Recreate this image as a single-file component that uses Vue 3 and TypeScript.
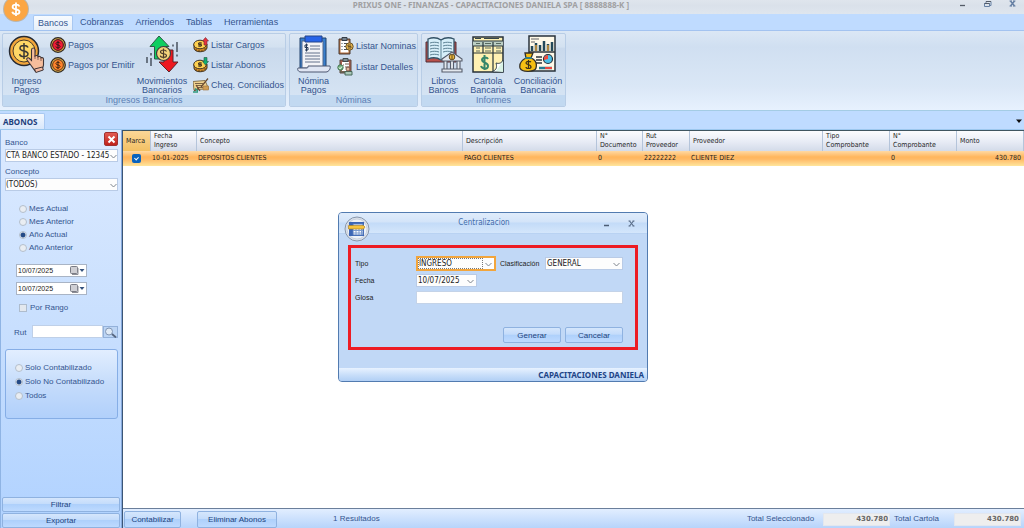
<script setup lang="ts">
import { ref } from 'vue'

const tabs = ['Bancos', 'Cobranzas', 'Arriendos', 'Tablas', 'Herramientas']
const activeTab = ref('Bancos')

const periods = ['Mes Actual', 'Mes Anterior', 'Año Actual', 'Año Anterior']
const period = ref('Año Actual')
const states = ['Solo Contabilizado', 'Solo No Contabilizado', 'Todos']
const state = ref('Solo No Contabilizado')

const fromDate = ref('10/07/2025')
const toDate = ref('10/07/2025')
const byRange = ref(false)
const rut = ref('')
const marked = ref(true)
const glosa = ref('')

interface Column { key: string; lines: string[] }
const columns: Column[] = [
  { key: 'mark', lines: ['Marca'] },
  { key: 'date', lines: ['Fecha', 'Ingreso'] },
  { key: 'concept', lines: ['Concepto'] },
  { key: 'desc', lines: ['Descripción'] },
  { key: 'doc', lines: ['N°', 'Documento'] },
  { key: 'rut', lines: ['Rut', 'Proveedor'] },
  { key: 'supplier', lines: ['Proveedor'] },
  { key: 'type', lines: ['Tipo', 'Comprobante'] },
  { key: 'num', lines: ['N°', 'Comprobante'] },
  { key: 'amount', lines: ['Monto'] },
]
</script>

<template>
  <div class="app">
    <header class="titlebar">
      <h1>PRIXUS ONE - FINANZAS - CAPACITACIONES DANIELA SPA [ 8888888-K ]</h1>
      <div class="winbtns">
        <button aria-label="Minimizar"><svg width="9" height="9" viewBox="0 0 9 9"><path d="M2 5.5h5" stroke="#555c68" stroke-width="1.3" /></svg></button>
        <button aria-label="Restaurar"><svg width="9" height="9" viewBox="0 0 9 9"><path d="M3 3V1.500h5v4H6.500M1.500 3.500h5v3h-5z" fill="none" stroke="#6680a4" /><path d="M3 1.500h5M1.500 3.500h5" stroke="#555c68" /></svg></button>
        <button aria-label="Cerrar"><svg width="9" height="9" viewBox="0 0 9 9"><path d="M2.500 1l4 5M6.500 1l-4 5" stroke="#6680a4" stroke-width="1.500" /><path d="M1.500 1H4M5 1h2.500M1.500 6H4M5 6h2.500" stroke="#6680a4" /></svg></button>
      </div>
      <div class="orb">
        <svg width="28" height="28" viewBox="0 0 28 28"><circle cx="14" cy="14" r="13" fill="#b9b5ae" /><circle cx="14" cy="14" r="12" fill="#fba644" /><path d="M17.500 11.500c-.6-1.400-1.700-1.900-3.500-1.900-2 0-3.400.8-3.400 2.300 0 3.400 6.900 1.600 6.900 4.800 0 1.600-1.500 2.400-3.500 2.400-1.900 0-3.400-.8-3.700-2.300M14 7.500v13.500" fill="none" stroke="#fff" stroke-width="1.800" /></svg>
      </div>
    </header>

    <nav class="tabs">
      <button v-for="t in tabs" :key="t" :class="{ active: t === activeTab }" @click="activeTab = t">{{ t }}</button>
    </nav>

    <section class="ribbon">
      <div class="group">
        <div class="group-body">
          <button class="big b-first">
            <svg width="38" height="38" viewBox="0 0 38 38">
              <circle cx="16" cy="16" r="14.500" fill="#f2a63b" stroke="#262a33" stroke-width="1.500" />
              <circle cx="16" cy="16" r="11" fill="#ffd766" stroke="#493a29" />
              <path d="M20 12.500c-.6-1.500-2-2-4-2-2.400 0-4 1-4 2.700 0 3.800 8 1.700 8 5.600 0 1.900-1.800 2.800-4 2.800-2.400 0-4-.8-4.400-2.600M16 8v16" fill="none" stroke="#3b3935" stroke-width="1.500" />
              <path d="M22 29l-3-4c-1-1.700 1-3 2.500-1.500l2 2V15c0-2.600 3.500-2.600 3.500 0v6c1-1 3-.6 3 .8 1-.9 3-.4 3 1 1.300-.6 2.500.2 2.500 1.500v5.500c0 2-1 3-1.500 4.500l-7 1.500z" fill="#f6bd9c" stroke="#3f3537" stroke-width="1.100" />
              <path d="M27 20v4M30 22v3M33 23v3" stroke="#704a44" stroke-width=".8" /><path d="M26.500 34l8-2 .8 3-7.500 2.500z" fill="#f3b9a2" stroke="#3f3537" />
            </svg>
            <span>Ingreso<br>Pagos</span>
          </button>
          <div class="smalls s-first">
            <button>
              <svg width="16" height="16" viewBox="0 0 16 16"><circle cx="8" cy="8" r="7.300" fill="#e3b34d" stroke="#2e2923" stroke-width="1.200" /><circle cx="8" cy="8" r="5.400" fill="#f01d35" stroke="#41181c" /><path d="M10 6.300c-.3-.8-1-1-2-1-1.200 0-2 .5-2 1.300 0 1.900 4 .9 4 2.800 0 1-.9 1.400-2 1.400-1.200 0-2-.4-2.200-1.300M8 4v8" fill="none" stroke="#33151a" /></svg>
              <span>Pagos</span>
            </button>
            <button>
              <svg width="16" height="16" viewBox="0 0 16 16"><circle cx="8" cy="8" r="7.300" fill="#e3b34d" stroke="#2e2923" stroke-width="1.200" /><circle cx="8" cy="8" r="5.400" fill="#ff842c" stroke="#63381a" /><path d="M10 6.300c-.3-.8-1-1-2-1-1.200 0-2 .5-2 1.300 0 1.900 4 .9 4 2.800 0 1-.9 1.400-2 1.400-1.200 0-2-.4-2.200-1.300M8 4v8" fill="none" stroke="#3d2313" /></svg>
              <span>Pagos por Emitir</span>
            </button>
          </div>
          <button class="big b-mov">
            <svg width="38" height="38" viewBox="0 0 38 38">
              <path d="M16 1l10 10.500h-5V24h-9.500V11.500H7z" fill="#0fce60" stroke="#2f5848" /><path d="M21 15h9v12h5l-9 10-10-10h5z" fill="#ed1820" stroke="#5b2428" />
              <circle cx="20.500" cy="18.500" r="7" fill="#f4d47c" stroke="#3d3d3d" stroke-width="1.200" /><path d="M23.500 16.500c-.5-1-1.500-1.500-3-1.500s-3 .6-3 2c0 2.500 6 1 6 3.500 0 1.300-1.400 1.900-3 1.900s-3-.6-3.200-1.700M20.500 13.500v10" fill="none" stroke="#4b3b2b" stroke-width="1.200" />
              <path d="M34 7v10M34 19.500v2M30 9.500v2M8 18v2.500M8 23v8M4 22v6" stroke="#515b67" stroke-width="1.600" />
            </svg>
            <span>Movimientos<br>Bancarios</span>
          </button>
          <div class="smalls s-three">
            <button>
              <svg width="16" height="16" viewBox="0 0 16 16"><path d="M1 7v4c0 5 12 5 13 0V7" fill="#d58c23" stroke="#3c3125" /><ellipse cx="7" cy="7.500" rx="6.300" ry="4.300" fill="#ffd150" stroke="#3c3125" /><path d="M9 6H5.500v1.500H8.500V9H5M7 5v5" fill="none" stroke="#493920" /><path d="M3 12v2M6 13v2M9 13v2M12 11v2" stroke="#59401d" /><path d="M12.500.5L15.500 4H14v4h-3V4H9.500z" fill="#e63240" stroke="#732831" stroke-width=".6" /></svg>
              <span>Listar Cargos</span>
            </button>
            <button>
              <svg width="16" height="16" viewBox="0 0 16 16"><path d="M1 7v4c0 5 12 5 13 0V7" fill="#d58c23" stroke="#3c3125" /><ellipse cx="7" cy="7.500" rx="6.300" ry="4.300" fill="#ffd150" stroke="#3c3125" /><path d="M9 6H5.500v1.500H8.500V9H5M7 5v5" fill="none" stroke="#493920" /><path d="M3 12v2M6 13v2M9 13v2M12 11v2" stroke="#59401d" /><path d="M11 .5h3v4h1.500L12.500 8l-3-3.500H11z" fill="#13ae70" stroke="#245442" stroke-width=".6" /></svg>
              <span>Listar Abonos</span>
            </button>
            <button>
              <svg width="16" height="16" viewBox="0 0 16 16"><path d="M0 4.500l12-1 3.500 8L1 13z" fill="#efd18e" stroke="#897652" /><path d="M2 6.500h8M3 8.500h6M4 10.500h7" stroke="#7c6345" /><path d="M8 10l7-8.500M3 8l4 6M6 11l-5 3" stroke="#6a4b32" stroke-width="1.200" /><path d="M2 11.500l3 2.500M0 15h5" stroke="#319a81" stroke-width="1.500" /><path d="M10 9h5.500v4H10z" fill="#d19e56" stroke="#9b713b" stroke-width=".6" /></svg>
              <span>Cheq. Conciliados</span>
            </button>
          </div>
        </div>
        <div class="group-name">Ingresos Bancarios</div>
      </div>

      <div class="group">
        <div class="group-body">
          <button class="big b-nom">
            <svg width="38" height="38" viewBox="0 0 38 38">
              <path d="M5 3h26v31H5z" fill="#397fcd" stroke="#20416a" /><path d="M7 6h21v27H7z" fill="#f3f3f7" stroke="#53698d" /><path d="M10 1h17v6H10z" fill="#2764e9" stroke="#25458a" />
              <path d="M15 11h10M15 14h10M10 18h15M10 21h15M10 24h15M10 27h15" stroke="#63708b" /><path d="M13 10h-3v2.500h3V15h-3M11.500 8.500v8" fill="none" stroke="#253857" />
              <path d="M13 31h22c1 2-1 6-4 6H6c-3 0-4-3-3-4h9c1 0 1-1 1-2z" fill="#dfe5f3" stroke="#4c5671" />
            </svg>
            <span>Nómina<br>Pagos</span>
          </button>
          <div class="smalls s-nom">
            <button>
              <svg width="17" height="18" viewBox="0 0 17 18"><path d="M2 2h11v15H2z" fill="#b56d3b" stroke="#493a35" /><path d="M3.500 3.500h8v12h-8z" fill="#fff" /><path d="M5 .5h5v3H5z" fill="#75818c" stroke="#353c46" /><path d="M4.500 6.500h1M4.500 9.500h1M4.500 12.500h1M7 6.500h4M7 9.500h3M7 12.500h3" stroke="#4c5057" /><circle cx="12.500" cy="9.500" r="3.700" fill="#e6b44c" stroke="#6b5328" /><path d="M14 8h-3v1.500h3V11h-3" fill="none" stroke="#6b5328" /></svg>
              <span>Listar Nominas</span>
            </button>
            <button>
              <svg width="17" height="18" viewBox="0 0 17 18"><path d="M3 2h11v13H3z" fill="#a8604f" stroke="#5c4940" /><path d="M5 4h7v9H5z" fill="#fff" /><path d="M6 .5h5v3H6z" fill="#7f8c93" stroke="#424b4d" /><path d="M8 6h4M8 9h4M6 7h1" stroke="#705a51" /><circle cx="3.500" cy="9.500" r="2.700" fill="#77b683" stroke="#437250" /><path d="M2 9.500l1 1.300L5 8.500" fill="none" stroke="#fff" /><path d="M8 13.500h7V17H8zM3 14h5" fill="#a9c7b8" stroke="#47685a" /><circle cx="11" cy="11" r="2" fill="#e1b89e" stroke="#785344" /></svg>
              <span>Listar Detalles</span>
            </button>
          </div>
        </div>
        <div class="group-name">Nóminas</div>
      </div>

      <div class="group">
        <div class="group-body">
          <button class="big b-lib">
            <svg width="38" height="38" viewBox="0 0 38 38">
              <path d="M1 7h30v20H1z" fill="#b9504a" stroke="#512f36" /><path d="M3 4c5-2 10-1 13 1 3-2 8-3 13-1v20c-5-2-10-1-13 1-3-2-8-3-13-1z" fill="#d6eff9" stroke="#345367" stroke-width="1.300" /><path d="M16 5v20M5 8c3-1 6-1 9 0M5 11c3-1 6-1 9 0M5 14c3-1 6-1 9 0M5 17c3-1 6-1 9 0M5 20c3-1 6-1 9 0M18 8c3-1 6-1 9 0M18 11c3-1 6-1 9 0M18 14c3-1 6-1 9 0M18 17c3-1 6-1 9 0" fill="none" stroke="#5b8193" />
              <path d="M17 24l10-7 10 7v2H17zM19 26h3v8h-3zM25.500 26h3v8h-3zM32 26h3v8h-3zM17 34h20v3H17z" fill="#e3e8ee" stroke="#565d6c" stroke-width="1.100" /><circle cx="27" cy="22" r="2.800" fill="#efb93d" stroke="#5f4b22" /><path d="M27 20v4" stroke="#5f4b22" />
            </svg>
            <span>Libros<br>Bancos</span>
          </button>
          <button class="big b-car">
            <svg width="38" height="38" viewBox="0 0 38 38">
              <path d="M4 2h30v35H4z" fill="#fff1b3" stroke="#273139" stroke-width="1.500" /><path d="M4 6h30v5H4z" fill="#bccfc4" /><path d="M6 3.500h6M15 3.500h15" stroke="#36454b" /><path d="M4 6h30M4 11h30M4 18h30M14 7v11M24 7v30" stroke="#26343a" stroke-width="1.200" /><path d="M7 8.500h4M16 8.500h6M27 8.500h5M7 13h4M7 16h4M16 13h6M16 16h6M27 13h5M27 16h5" stroke="#58695f" /><path d="M19 24c-1-2-6-2-6 1s6 2 6 6-6 3-7 0M15.500 20v15" fill="none" stroke="#36866b" stroke-width="2" /><path d="M24 36c4-1 4-5 3-8 3 1 6 0 7-3v12H24z" fill="#fff" stroke="#33434a" /><path d="M27 36l7-10v11z" fill="#d9f3e6" />
            </svg>
            <span>Cartola<br>Bancaria</span>
          </button>
          <button class="big b-con">
            <svg width="38" height="38" viewBox="0 0 38 38">
              <path d="M10 1h26v35H10z" fill="#fff9e8" stroke="#28323b" stroke-width="1.500" /><path d="M12 4h8M12 7h4" stroke="#656566" stroke-width="1.200" /><path d="M13 11v5M17 8v8M21 10v6M25 6v10M29 9v7M33 7v9" stroke="#23495a" stroke-width="2.500" /><path d="M17 10v6M29 10v6" stroke="#dd9d39" stroke-width="1.500" /><path d="M10 17h26M17 22h6M17 25h6M17 28h6" stroke="#2e363b" stroke-width="1.600" /><circle cx="29" cy="24" r="4.500" fill="#4cc0e7" stroke="#27323c" stroke-width="1.200" /><path d="M29 24v-4a4 4 0 0 0-4 5z" fill="#f04c3d" /><path d="M20 33h13" stroke="#237b91" stroke-width="2.500" /><path d="M26 33h7" stroke="#ea4740" stroke-width="2" />
              <path d="M6 18h8l-2 5c5 2 6 6 5 10-1 4-14 5-16 0-1-5 2-8 6-10z" fill="#f6bf13" stroke="#34312b" stroke-width="1.300" /><path d="M6 23h7" stroke="#327c83" stroke-width="2" /><path d="M12 27c-1-1-5-1-5 1 0 2 5 1 5 4 0 2-5 2-5 0M9.500 25v9" fill="none" stroke="#3c3019" stroke-width="1.200" />
            </svg>
            <span>Conciliación<br>Bancaria</span>
          </button>
        </div>
        <div class="group-name">Informes</div>
      </div>
    </section>

    <div class="docs">
      <button class="doc">ABONOS</button>
      <button class="doc-menu" aria-label="Ventanas"><svg width="8" height="5" viewBox="0 0 8 5"><path d="M1 .5h6L4 4z" fill="#111" /></svg></button>
    </div>

    <div class="body">
      <aside class="side">
        <button class="side-close" aria-label="Cerrar panel"><svg width="9" height="9" viewBox="0 0 9 9"><path d="M1.500 1.500l6 6M7.500 1.500l-6 6" stroke="#fff" stroke-width="2" /></svg></button>
        <label class="cap first" for="bank">Banco</label>
        <div class="pick">
          <select id="bank"><option>CTA BANCO ESTADO - 12345</option></select>
          <svg width="7" height="5" viewBox="0 0 7 5"><path d="M.5 1l3 3 3-3" fill="none" stroke="#7e858e" /></svg>
        </div>
        <label class="cap" for="concept">Concepto</label>
        <div class="pick">
          <select id="concept"><option>(TODOS)</option></select>
          <svg width="7" height="5" viewBox="0 0 7 5"><path d="M.5 1l3 3 3-3" fill="none" stroke="#7e858e" /></svg>
        </div>
        <div class="periods">
          <label v-for="p in periods" :key="p"><input v-model="period" type="radio" name="period" :value="p">{{ p }}</label>
        </div>
        <div class="date">
          <input v-model="fromDate" type="text" aria-label="Desde">
          <button aria-label="Elegir fecha inicial"><svg width="17" height="9" viewBox="0 0 17 9"><rect x="1.500" y=".5" width="7" height="7" rx="1" fill="#cfcfd4" stroke="#797b84" /><path d="M3 8.500h6V2" fill="none" stroke="#8d8e96" /><path d="M10.500 3h5L13 6z" fill="#35527e" /></svg></button>
        </div>
        <div class="date">
          <input v-model="toDate" type="text" aria-label="Hasta">
          <button aria-label="Elegir fecha final"><svg width="17" height="9" viewBox="0 0 17 9"><rect x="1.500" y=".5" width="7" height="7" rx="1" fill="#cfcfd4" stroke="#797b84" /><path d="M3 8.500h6V2" fill="none" stroke="#8d8e96" /><path d="M10.500 3h5L13 6z" fill="#35527e" /></svg></button>
        </div>
        <label class="range"><input v-model="byRange" type="checkbox">Por Rango</label>
        <div class="rut">
          <label for="rut">Rut</label>
          <input id="rut" v-model="rut" type="text">
          <button aria-label="Buscar rut"><svg width="13" height="11" viewBox="0 0 13 11"><circle cx="5" cy="4.500" r="3.500" fill="#dfeaf6" stroke="#8296b5" /><path d="M8 7l4 3.500" stroke="#57667f" stroke-width="1.800" /></svg></button>
        </div>
        <div class="states">
          <label v-for="s in states" :key="s"><input v-model="state" type="radio" name="state" :value="s">{{ s }}</label>
        </div>
        <div class="side-actions">
          <button class="btn">Filtrar</button>
          <button class="btn">Exportar</button>
        </div>
      </aside>

      <main class="main">
        <div class="grid">
          <table>
            <colgroup><col v-for="c in columns" :key="c.key" :class="'c-' + c.key"></colgroup>
            <thead>
              <tr>
                <th v-for="c in columns" :key="c.key" :class="'h-' + c.key"><div v-for="l in c.lines" :key="l">{{ l }}</div></th>
              </tr>
            </thead>
            <tbody>
              <tr>
                <td class="mark"><input v-model="marked" type="checkbox" aria-label="Marca"></td>
                <td>10-01-2025</td>
                <td>DEPOSITOS CLIENTES</td>
                <td>PAGO CLIENTES</td>
                <td>0</td>
                <td>22222222</td>
                <td>CLIENTE DIEZ</td>
                <td></td>
                <td>0</td>
                <td class="num">430.780</td>
              </tr>
            </tbody>
          </table>
        </div>
        <footer class="foot">
          <button class="btn post">Contabilizar</button>
          <button class="btn del">Eliminar Abonos</button>
          <span class="count">1 Resultados</span>
          <label for="sel">Total Seleccionado</label>
          <input id="sel" class="t-sel" type="text" value="430.780" readonly>
          <label for="car">Total Cartola</label>
          <input id="car" class="t-car" type="text" value="430.780" readonly>
        </footer>
      </main>
    </div>

    <div class="dialog" role="dialog" aria-labelledby="dlg-title">
      <div class="dlg-bar">
        <h2 id="dlg-title">Centralizacion</h2>
        <button aria-label="Minimizar diálogo"><svg width="9" height="9" viewBox="0 0 9 9"><path d="M2 6.500h5" stroke="#4c5d75" stroke-width="1.300" /></svg></button>
        <button aria-label="Cerrar diálogo"><svg width="9" height="9" viewBox="0 0 9 9"><path d="M2.500 2l4 5M6.500 2l-4 5" stroke="#5b6f8a" stroke-width="1.200" /><path d="M1.500 2h2M5.500 2h2M1.500 7h2M5.500 7h2" stroke="#5b6f8a" /></svg></button>
      </div>
      <div class="dlg-orb">
        <svg width="26" height="26" viewBox="0 0 26 26"><circle cx="13" cy="13" r="12" fill="#dbe1eb" stroke="#8896aa" /><circle cx="13" cy="13" r="10" fill="#eef2f8" stroke="#b9c3d2" stroke-width=".6" /><path d="M5 6h15v14H5z" fill="#3c66b5" /><path d="M9 8h10v11H9z" fill="#fff" stroke="#5579bb" /><path d="M9 14.500h10M9 17h10M12 12v7M15 12v7M17.500 12v7" stroke="#7c9bce" /><path d="M4.500 9.500h15l1.500 1.500-1.500 2h-15z" fill="#f7c33d" stroke="#a98224" stroke-width=".7" /></svg>
      </div>
      <form class="form" @submit.prevent>
        <div class="row">
          <label for="kind">Tipo</label>
          <div class="pick kind">
            <select id="kind"><option>INGRESO</option></select>
            <svg width="7" height="5" viewBox="0 0 7 5"><path d="M.5 1l3 3 3-3" fill="none" stroke="#7e858e" /></svg>
          </div>
          <label class="second" for="class">Clasificación</label>
          <div class="pick class">
            <select id="class"><option>GENERAL</option></select>
            <svg width="7" height="5" viewBox="0 0 7 5"><path d="M.5 1l3 3 3-3" fill="none" stroke="#7e858e" /></svg>
          </div>
        </div>
        <div class="row">
          <label for="day">Fecha</label>
          <div class="pick day">
            <select id="day"><option>10/07/2025</option></select>
            <svg width="7" height="5" viewBox="0 0 7 5"><path d="M.5 1l3 3 3-3" fill="none" stroke="#7e858e" /></svg>
          </div>
        </div>
        <div class="row">
          <label for="glosa">Glosa</label>
          <input id="glosa" v-model="glosa" class="glosa" type="text">
        </div>
        <div class="dlg-actions">
          <button class="btn" type="submit">Generar</button>
          <button class="btn" type="button">Cancelar</button>
        </div>
      </form>
      <div class="dlg-status">CAPACITACIONES DANIELA</div>
    </div>
  </div>
</template>

<style>
html, body { height: 100%; }
body { margin: 0; overflow: hidden; }
#app { height: 100%; }
</style>

<style scoped>
.app {
  --ui: "Liberation Sans", Arial, sans-serif;
  --data: "DejaVu Sans Condensed", "DejaVu Sans", sans-serif;
  --title: "Noto Sans", sans-serif;
  --ink: #34558f;
  position: relative;
  display: flex;
  flex-direction: column;
  min-height: 100vh;
  font: 9px/10px var(--ui);
  color: var(--ink);
  background: #bfdbff;
}
.app *, .app *::before, .app *::after { box-sizing: border-box; }
button, input, select { font: inherit; color: inherit; margin: 0; padding: 0; border: 0; background: none; border-radius: 0; }
button { white-space: nowrap; }
svg { display: block; flex: none; }
h1, h2 { margin: 0; }
label { white-space: nowrap; }

.titlebar {
  position: relative;
  display: flex;
  justify-content: center;
  height: 14px;
  background: linear-gradient(#dfe5ed, #dae1ea 40%, #dfe6ee);
}
h1 { margin-right: 42px; font: bold 8px/10px var(--title); color: #a0a0a2; white-space: nowrap; }
.winbtns { position: absolute; right: 7px; top: 0; display: flex; gap: 16px; }
.orb { position: absolute; left: 2px; top: -5px; z-index: 2; }

.tabs { display: flex; align-items: flex-end; height: 17px; padding: 0 0 0 33px; border-bottom: 1px solid #a3c3f0; }
.tabs button { padding: 0 6px; height: 15px; line-height: 15px; }
.tabs .active { padding: 0 4px; margin-right: 1px; background: linear-gradient(#f7fbff, #e6eff9); border: 1px solid #a9c8f1; border-bottom: 0; border-radius: 2px 2px 0 0; }

.ribbon {
  display: flex;
  gap: 3px;
  height: 80px;
  padding: 2px 2px 3px;
  background: linear-gradient(#dbe7f5, #d0dff1 20%, #dae7f6 70%, #e7f1fe);
  border-bottom: 1px solid #a4cce4;
}
.group { display: flex; flex-direction: column; border: 1px solid #b8cde6; border-radius: 2px; background: linear-gradient(#dde8f5, #d3e1f0 18%, #c9d9ec 20%, #d8e6f5); overflow: hidden; }
.group-body { display: flex; flex: 1; }
.group-name { height: 11px; line-height: 11px; text-align: center; color: #5d80b5; background: #c2d9f1; }
.big { display: flex; flex-direction: column; align-items: center; padding-top: 1px; line-height: 9px; }
.big span { margin-top: 4px; }
.b-first { width: 47px; }
.b-mov { width: 54px; }
.b-nom { width: 47px; }
.b-lib { width: 43px; }
.b-car { width: 46px; }
.b-con { width: 54px; }
.smalls button { display: flex; align-items: center; gap: 2px; height: 20px; }
.s-first { width: 85px; }
.s-three { width: 96px; padding-left: 4px; }
.s-first, .s-three { padding-top: 1px; }
.s-nom { width: 80px; padding-top: 1px; }
.s-nom button { height: 21px; }

.docs { display: flex; justify-content: space-between; height: 19px; padding-top: 2px; border-bottom: 1px solid #9cc7ee; }
.doc { width: 45px; font: bold 8px/14px var(--title); color: #1d3f7c; background: linear-gradient(#f3f8fe, #d8e7fb); border: 1px solid #a9c8f1; border-width: 1px 1px 0 0; border-radius: 0 2px 0 0; text-align: left; padding-left: 3px; }
.doc-menu { margin-right: 1px; }

.body { display: flex; flex: 1; }
.side {
  position: relative;
  display: flex;
  flex-direction: column;
  width: 122px;
  padding: 2px 3px 0 4px;
  font-size: 8px;
  background: linear-gradient(#dceaff, #c8dffe 50%, #b0d2ff);
  border-left: 1px solid #8fb4e4;
  border-right: 1px solid #86a9dc;
}
.side-close { position: absolute; right: 3px; top: 2px; width: 14px; height: 14px; display: grid; place-items: center; background: linear-gradient(#e25a52, #c0221b); border: 1px solid #a03130; border-radius: 2px; }
.cap { height: 10px; margin-top: 5px; }
.cap.first { margin-top: 6px; }
.pick { position: relative; display: flex; align-items: center; height: 13px; background: #fdfdfd; border: 1px solid #b9cbe6; color: #222; }
.pick select { flex: 1; min-width: 0; width: 100%; height: 100%; padding-left: 1px; appearance: none; font: 8px/11px var(--data); outline: 0; }
.pick svg { position: absolute; right: 2px; top: 4px; pointer-events: none; }
.side .pick { margin-top: 1px; }
.side .pick select { padding-left: 0; }
.side .pick svg { right: 0; }
.periods { display: flex; flex-direction: column; padding: 11px 0 0 14px; }
.periods label, .states label { display: flex; align-items: center; gap: 2px; height: 13px; }
input[type=radio] { appearance: none; width: 8px; height: 8px; border: 1px solid #b4bfcc; border-radius: 50%; background: #e9edf2; }
input[type=radio]:checked { background: radial-gradient(circle, #244a86 0 2px, #e9edf2 3px); }
.date { display: flex; align-items: center; width: 71px; height: 13px; margin: 10px 0 0 11px; background: #fff; border: 1px solid #a9b4c5; color: #222; }
.date + .date { margin-top: 5px; }
.date input { flex: 1; min-width: 0; height: 11px; padding-left: 1px; font-size: 7px; }
.range { display: flex; align-items: center; gap: 3px; height: 13px; margin: 6px 0 0 14px; }
.range input { appearance: none; width: 8px; height: 8px; border: 1px solid #aebccd; background: #e3e8ee; }
.rut { display: flex; align-items: center; height: 13px; margin: 11px 0 0 9px; }
.rut label { width: 18px; padding-top: 3px; }
.rut input { flex: 1; min-width: 0; height: 13px; background: #fff; border: 1px solid #bfd0e8; }
.rut button { width: 15px; height: 12px; display: grid; place-items: center; background: #bcd5f5; border: 1px solid #93b1da; }
.states { height: 70px; margin-top: 11px; padding: 11px 0 0 9px; border: 1px solid #86aee6; border-radius: 3px; background: linear-gradient(#e2eeff, #c5dcfb 50%, #b1d0fb); }
.states label { height: 14px; }
.side-actions { display: flex; flex-direction: column; gap: 1px; margin: auto -2px 0 -3px; }
.btn { height: 15px; line-height: 13px; font-size: 8px; text-align: center; color: #22447e; background: linear-gradient(#d5e6fc, #c4dcfb 45%, #aed0fb 50%, #bedaff); border: 1px solid #8fb2e0; border-radius: 2px; }

.main { display: flex; flex: 1; flex-direction: column; min-width: 0; border-left: 1px solid #3c5676; border-top: 1px solid #3f5560; }
.grid { flex: 1; background: #fff; }
table { width: 100%; table-layout: fixed; border-collapse: separate; border-spacing: 0; font: 7px/9px var(--data); color: #1f1f1f; }
.c-mark { width: 28px; }
.c-date { width: 46px; }
.c-desc { width: 134px; }
.c-doc { width: 46px; }
.c-rut { width: 47px; }
.c-supplier { width: 133px; }
.c-type, .c-num, .c-amount { width: 67px; }
th { height: 20px; padding: 0 0 0 3px; font-weight: normal; text-align: left; background: linear-gradient(#fbfcfe, #e7ebf5 55%, #d3dbe9); border-right: 1px solid #b4c4da; }
th.h-mark { background: linear-gradient(#fbd798, #f3c063); }
td { height: 15px; padding: 0 0 0 1px; background: linear-gradient(#ffd9a3, #ffb65d 40%, #ffba66 55%, #ffe59c); white-space: nowrap; }
.mark { padding-left: 9px; }
.mark input { display: block; appearance: none; width: 9px; height: 9px; border-radius: 2px; background: #0a62bd; position: relative; }
.mark input:checked::after { content: ""; position: absolute; left: 3px; top: 2px; width: 3px; height: 4px; border: solid #fff; border-width: 0 1px 1px 0; transform: rotate(45deg); }
.num { text-align: right; padding-right: 3px; }

.foot { display: flex; align-items: center; height: 20px; padding: 1px 3px 0 1px; font-size: 8px; background: linear-gradient(#e2eeff, #b7d4fb); border-top: 1px solid #6b7f9b; }
.foot .btn { height: 17px; line-height: 15px; }
.post { width: 57px; }
.del { width: 80px; margin-left: 16px; }
.count { margin: 0 auto 0 56px; }
.foot input { width: 67px; height: 13px; padding-right: 1px; text-align: right; font: bold 7px/13px "DejaVu Sans", sans-serif; color: #666; background: #eee; border: 1px solid #e3e7ee; }
.t-sel { margin: 0 4px 0 9px; }
.t-car { margin-left: 15px; }

.dialog {
  position: absolute;
  left: 338px;
  top: 212px;
  width: 310px;
  display: flex;
  flex-direction: column;
  font: 7px/10px var(--ui);
  color: #222;
  background: #c1d8f6;
  border: 1px solid #527bb0;
  border-radius: 4px;
  overflow: hidden;
}
.dlg-bar { display: flex; align-items: center; gap: 16px; height: 21px; padding-right: 11px; background: linear-gradient(#e0ecfb, #d3e4f9 45%, #c3dbf8 50%, #d4e6fb); border-bottom: 1px solid #b9d2f2; }
h2 { flex: 1; padding-left: 43px; text-align: center; font: 8px/12px var(--data); color: #3e6aaa; }
.dlg-orb { position: absolute; left: 5px; top: 3px; }
.form { margin: 11px 9px 0; padding: 7px 12px 4px 4px; border: 3px solid #ed1c24; }
.row { display: flex; align-items: center; height: 17px; }
.row label { width: 61px; }
.row .second { width: 49px; padding-left: 4px; }
.kind { width: 80px; height: 15px; border: 2px solid #f2a53c; }
.kind select { width: 65px; flex: none; outline: 1px dotted #777; outline-offset: -1px; }
.class { flex: 1; }
.day { width: 61px; }
.glosa { flex: 1; min-width: 0; height: 13px; background: #fff; border: 1px solid #c4d3e8; }
.dlg-actions { display: flex; justify-content: flex-end; gap: 4px; margin-top: 21px; }
.dlg-actions .btn { width: 58px; height: 16px; }
.dlg-status { height: 13px; margin: 18px 0 0; padding-right: 3px; text-align: right; font: bold 8px/13px var(--title); color: #1d4487; background: linear-gradient(#e8f2ff, #c5dcf9 60%, #b1cff5); }
</style>
